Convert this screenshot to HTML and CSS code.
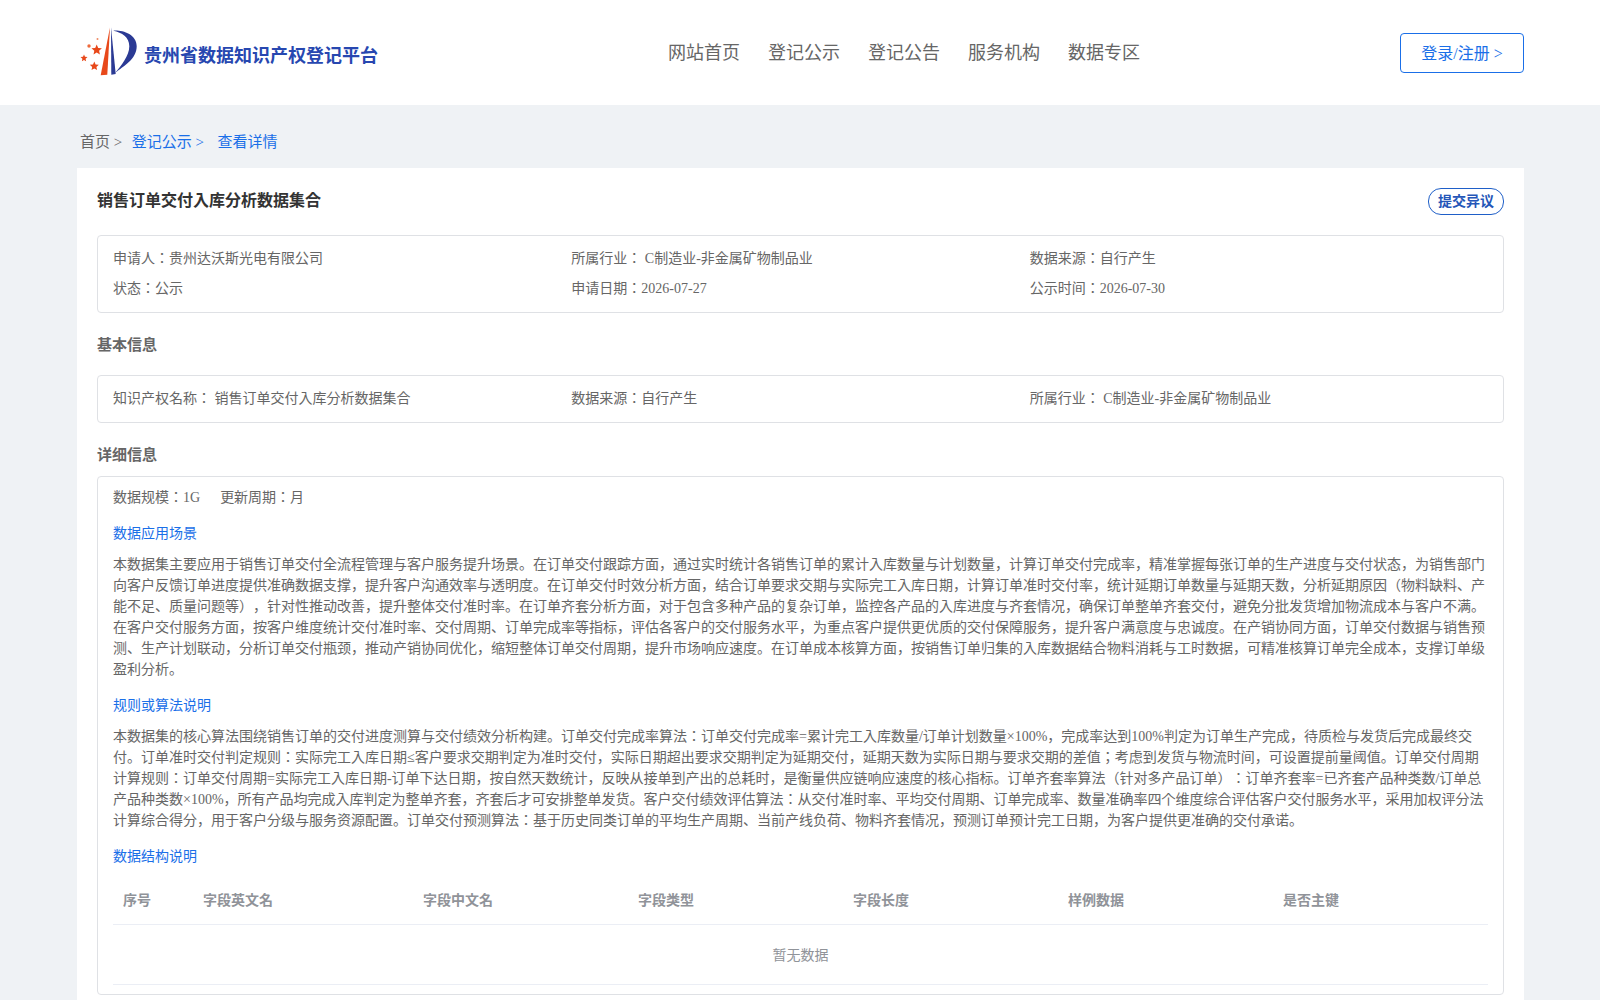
FILE: index.html
```html
<!DOCTYPE html>
<html lang="ja">
<head>
<meta charset="utf-8">
<title>贵州省数据知识产权登记平台</title>
<link rel="stylesheet" href="styles.css">
</head>
<body>
<header class="topbar">
  <a class="brand">
    <svg class="brand-logo" width="60" height="52" viewBox="0 0 60 52">
      <path d="M30 1.3 L20.7 49.3 L27.3 48.7 Z" fill="#e8481a"/>
      <path d="M31 1.3 L31.3 48.7 L35.7 48 Z" fill="#2b3a94"/>
      <path d="M33.3 4.7 C42 4 56.7 8 56.7 20.3 C56.7 33 44 40 35 47 C41 40 49.3 30 49.3 20.3 C49.3 11 42 6.5 33.3 4.7 Z" fill="#2b3a94"/>
      <path d="M16.7 18.5 l1.5 3.4 3.7.4-2.8 2.5.8 3.7-3.2-1.9-3.2 1.9.8-3.7-2.8-2.5 3.7-.4 Z" fill="#e8481a"/>
      <path d="M4 28.5 l1 2.3 2.5.3-1.9 1.7.5 2.5-2.1-1.3-2.1 1.3.5-2.5-1.9-1.7 2.5-.3 Z" fill="#e8481a"/>
      <path d="M14.3 35.5 l1.3 3 3.2.3-2.4 2.1.7 3.2-2.8-1.6-2.8 1.6.7-3.2-2.4-2.1 3.2-.3 Z" fill="#e8481a"/>
      <circle cx="9" cy="20" r="1.7" fill="#ee6a3c"/>
      <circle cx="17.5" cy="13" r="1" fill="#ee8a64"/>
    </svg>
    <span class="brand-name">贵州省数据知识产权登记平台</span>
  </a>
  <nav class="nav">
    <a>网站首页</a>
    <a>登记公示</a>
    <a>登记公告</a>
    <a>服务机构</a>
    <a>数据专区</a>
  </nav>
  <a class="login">登录/注册 &gt;</a>
</header>
<main class="page">
  <div class="crumbs">
    <span class="crumb-home">首页 &gt;</span>
    <span class="crumb-link">登记公示 &gt;</span>
    <span class="crumb-current">查看详情</span>
  </div>
  <section class="card">
    <div class="title-row">
      <h1 class="title">销售订单交付入库分析数据集合</h1>
      <button class="objection">提交异议</button>
    </div>
    <div class="box info-grid">
      <div>申请人：贵州达沃斯光电有限公司</div>
      <div>所属行业： C制造业-非金属矿物制品业</div>
      <div>数据来源：自行产生</div>
      <div>状态：公示</div>
      <div>申请日期：2026-07-27</div>
      <div>公示时间：2026-07-30</div>
    </div>
    <h2 class="section-head first">基本信息</h2>
    <div class="box info-grid">
      <div>知识产权名称： 销售订单交付入库分析数据集合</div>
      <div>数据来源：自行产生</div>
      <div>所属行业： C制造业-非金属矿物制品业</div>
    </div>
    <h2 class="section-head second">详细信息</h2>
    <div class="box detail">
      <div class="meta"><span>数据规模：1G</span><span>更新周期：月</span></div>
      <h3 class="sub">数据应用场景</h3>
      <p class="para">本数据集主要应用于销售订单交付全流程管理与客户服务提升场景。在订单交付跟踪方面，通过实时统计各销售订单的累计入库数量与计划数量，计算订单交付完成率，精准掌握每张订单的生产进度与交付状态，为销售部门向客户反馈订单进度提供准确数据支撑，提升客户沟通效率与透明度。在订单交付时效分析方面，结合订单要求交期与实际完工入库日期，计算订单准时交付率，统计延期订单数量与延期天数，分析延期原因（物料缺料、产能不足、质量问题等），针对性推动改善，提升整体交付准时率。在订单齐套分析方面，对于包含多种产品的复杂订单，监控各产品的入库进度与齐套情况，确保订单整单齐套交付，避免分批发货增加物流成本与客户不满。在客户交付服务方面，按客户维度统计交付准时率、交付周期、订单完成率等指标，评估各客户的交付服务水平，为重点客户提供更优质的交付保障服务，提升客户满意度与忠诚度。在产销协同方面，订单交付数据与销售预测、生产计划联动，分析订单交付瓶颈，推动产销协同优化，缩短整体订单交付周期，提升市场响应速度。在订单成本核算方面，按销售订单归集的入库数据结合物料消耗与工时数据，可精准核算订单完全成本，支撑订单级盈利分析。</p>
      <h3 class="sub">规则或算法说明</h3>
      <p class="para">本数据集的核心算法围绕销售订单的交付进度测算与交付绩效分析构建。订单交付完成率算法：订单交付完成率=累计完工入库数量/订单计划数量×100%，完成率达到100%判定为订单生产完成，待质检与发货后完成最终交付。订单准时交付判定规则：实际完工入库日期≤客户要求交期判定为准时交付，实际日期超出要求交期判定为延期交付，延期天数为实际日期与要求交期的差值；考虑到发货与物流时间，可设置提前量阈值。订单交付周期计算规则：订单交付周期=实际完工入库日期-订单下达日期，按自然天数统计，反映从接单到产出的总耗时，是衡量供应链响应速度的核心指标。订单齐套率算法（针对多产品订单）：订单齐套率=已齐套产品种类数/订单总产品种类数×100%，所有产品均完成入库判定为整单齐套，齐套后才可安排整单发货。客户交付绩效评估算法：从交付准时率、平均交付周期、订单完成率、数量准确率四个维度综合评估客户交付服务水平，采用加权评分法计算综合得分，用于客户分级与服务资源配置。订单交付预测算法：基于历史同类订单的平均生产周期、当前产线负荷、物料齐套情况，预测订单预计完工日期，为客户提供更准确的交付承诺。</p>
      <h3 class="sub sub-tight">数据结构说明</h3>
      <table class="fields">
        <colgroup>
          <col class="col-index"><col class="col-en"><col><col><col><col><col>
        </colgroup>
        <thead>
          <tr><th>序号</th><th>字段英文名</th><th>字段中文名</th><th>字段类型</th><th>字段长度</th><th>样例数据</th><th>是否主键</th></tr>
        </thead>
        <tbody>
          <tr><td class="empty" colspan="7">暂无数据</td></tr>
        </tbody>
      </table>
    </div>
  </section>
</main>
</body>
</html>
```

FILE: styles.css
```css
* { box-sizing: border-box; }
html, body { margin: 0; padding: 0; }
body {
  height: 100vh;
  overflow: hidden;
  background: #eff2f5;
  color: #666;
  font-family: "Liberation Serif", "Noto Sans CJK JP", serif;
  font-size: 14px;
  text-spacing-trim: space-all;
}
.topbar {
  height: 105px;
  background: #fff;
  display: flex;
  align-items: center;
  padding: 0 76px 0 80px;
}
.brand { display: flex; align-items: center; width: 520px; padding-top: 6px; }
.brand-logo { flex: none; display: block; margin-top: -8px; margin-right: 4px; }
.brand-name { color: #2747b0; font-size: 18px; font-weight: 700; line-height: 26px; }
.nav { display: flex; gap: 28px; margin-left: 68px; }
.nav a { color: #666; font-size: 18px; line-height: 26px; }
.login {
  margin-left: auto;
  width: 124px;
  height: 40px;
  border: 1px solid #1a6fe8;
  border-radius: 4px;
  color: #1a6fe8;
  font-size: 16px;
  line-height: 40px;
  text-align: center;
}
.page { padding: 0 76px 0 77px; }
.crumbs {
  height: 63px;
  padding: 27px 0 0 3px;
  font-size: 15px;
  line-height: 20px;
  display: flex;
}
.crumb-home { margin-right: 9.5px; }
.crumb-link { color: #1a6fe8; margin-right: 13.5px; }
.crumb-current { color: #1a6fe8; }
.card { background: #fff; padding: 20px; }
.title-row { display: flex; justify-content: space-between; align-items: flex-start; height: 47px; }
.title { margin: 1px 0 0; color: #333; font-size: 16px; font-weight: 700; line-height: 24px; }
.objection {
  width: 76px;
  height: 27px;
  padding: 0;
  background: #fff;
  border: 1px solid #1f5fc8;
  border-radius: 13px;
  color: #2456b8;
  font: 700 14px/25px "Liberation Serif", "Noto Sans CJK JP", serif;
}
.box { border: 1px solid #dfe1e5; border-radius: 4px; }
.info-grid {
  display: grid;
  grid-template-columns: repeat(3, 1fr);
  padding: 8px 15px;
  line-height: 30px;
}
.section-head { margin: 0; color: #666; font-size: 15px; font-weight: 700; line-height: 22px; }
.section-head.first { padding: 21px 0 19px; }
.section-head.second { padding: 21px 0 10px; }
.detail { padding: 10px 15px 0; height: 519px; }
.meta { display: flex; gap: 20px; height: 21px; line-height: 21px; }
.sub { margin: 16px 0 10px; color: #1a6fe8; font-size: 14px; font-weight: 400; line-height: 20px; }
.sub-tight { margin-bottom: 8px; }
.para { margin: 0; line-height: 21px; }
.fields { width: 100%; table-layout: fixed; border-collapse: collapse; }
.col-index { width: 80px; }
.col-en { width: 220px; }
.fields th {
  height: 49px;
  padding: 0 10px;
  color: #909399;
  font-size: 14px;
  font-weight: 700;
  text-align: left;
  border-bottom: 1px solid #ebeef5;
}
.fields .empty {
  height: 60px;
  color: #909399;
  text-align: center;
  border-bottom: 1px solid #ebeef5;
}
```
